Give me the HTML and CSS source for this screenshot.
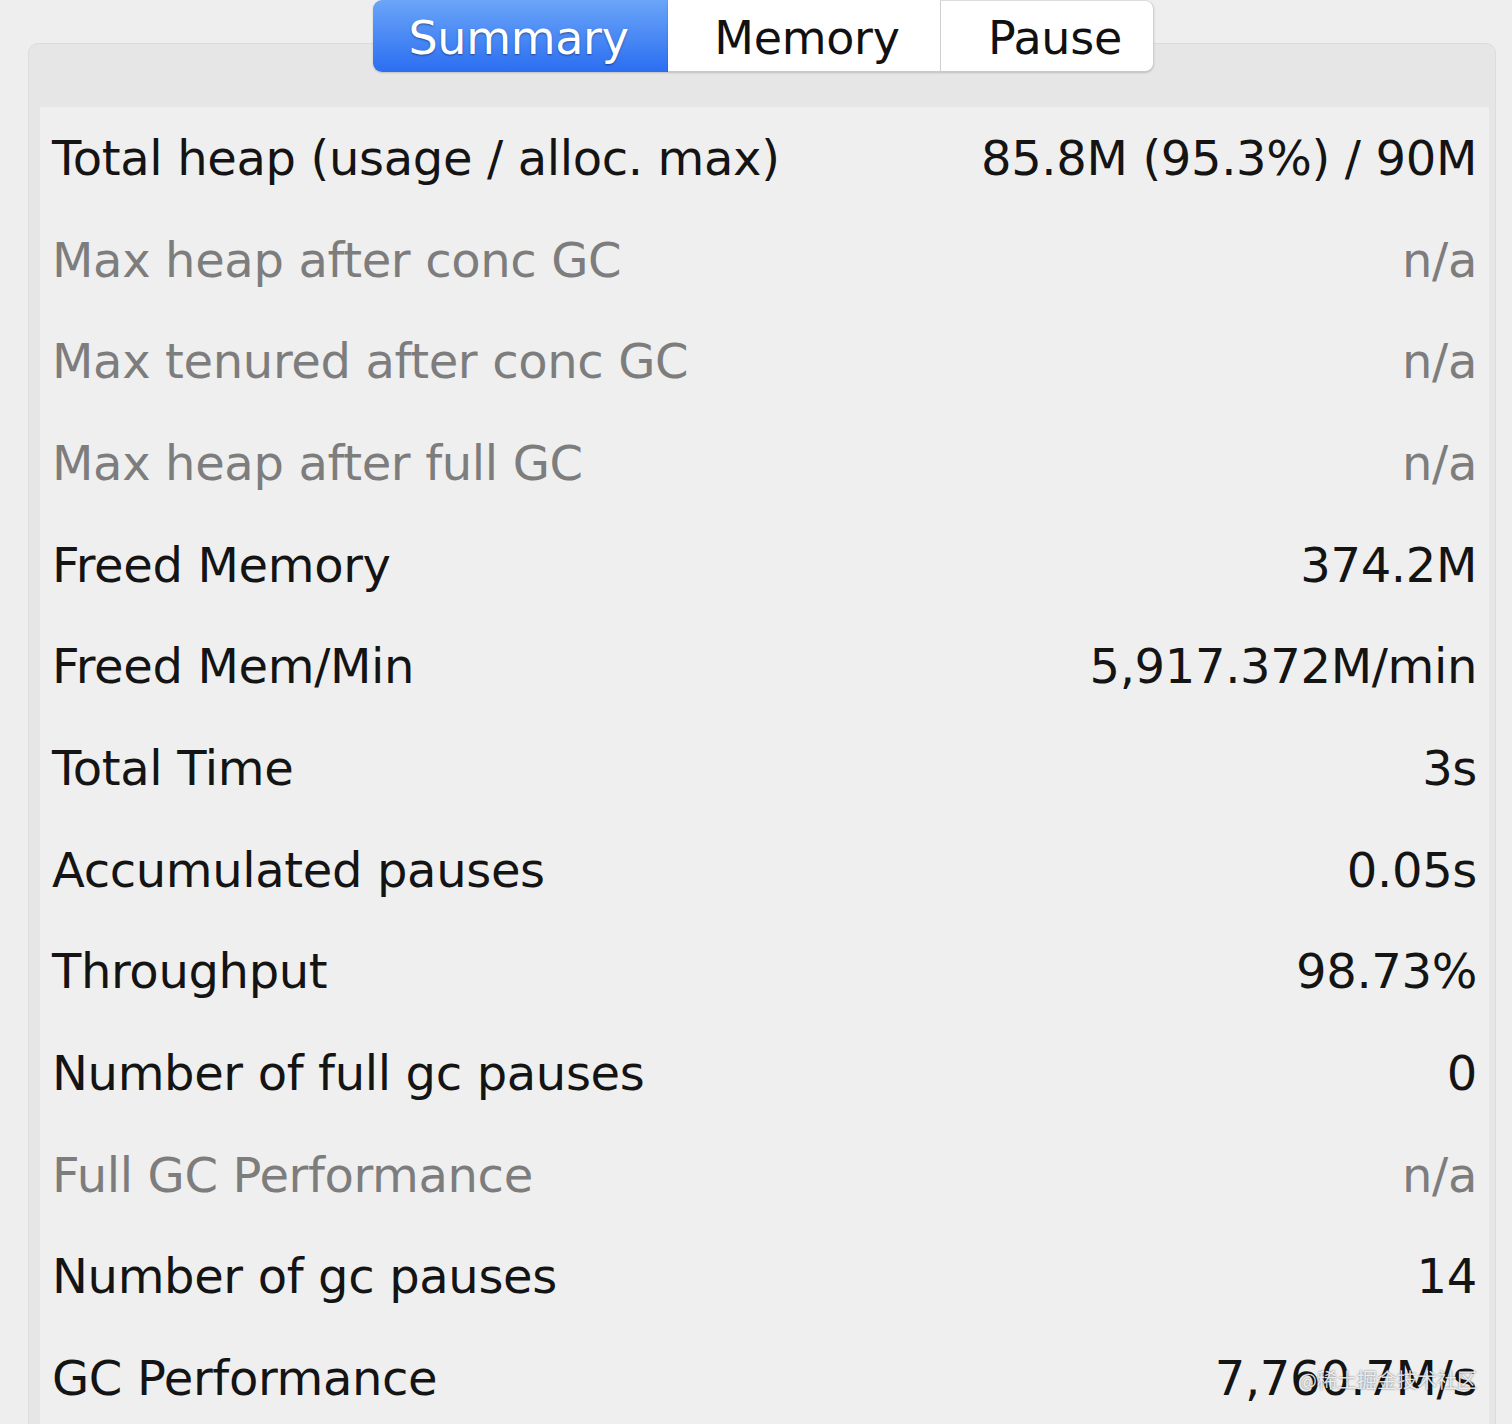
FILE: index.html
```html
<!DOCTYPE html>
<html>
<head>
<meta charset="utf-8">
<link rel="stylesheet" href="styles.css">
</head>
<body>
<div class="tabs">
  <div class="tab active">Summary</div>
  <div class="tab">Memory</div>
  <div class="tab last">Pause</div>
</div>
<div class="frame">
  <div class="content">
    <div class="row"><span class="label">Total heap (usage / alloc. max)</span><span class="value">85.8M (95.3%) / 90M</span></div>
    <div class="row muted"><span class="label">Max heap after conc GC</span><span class="value">n/a</span></div>
    <div class="row muted"><span class="label">Max tenured after conc GC</span><span class="value">n/a</span></div>
    <div class="row muted"><span class="label">Max heap after full GC</span><span class="value">n/a</span></div>
    <div class="row"><span class="label">Freed Memory</span><span class="value">374.2M</span></div>
    <div class="row"><span class="label">Freed Mem/Min</span><span class="value">5,917.372M/min</span></div>
    <div class="row"><span class="label">Total Time</span><span class="value">3s</span></div>
    <div class="row"><span class="label">Accumulated pauses</span><span class="value">0.05s</span></div>
    <div class="row"><span class="label">Throughput</span><span class="value">98.73%</span></div>
    <div class="row"><span class="label">Number of full gc pauses</span><span class="value">0</span></div>
    <div class="row muted"><span class="label">Full GC Performance</span><span class="value">n/a</span></div>
    <div class="row"><span class="label">Number of gc pauses</span><span class="value">14</span></div>
    <div class="row last-row"><span class="label">GC Performance</span><span class="value">7,760.7M/s</span><span class="watermark">@稀土掘金技术社区</span></div>
  </div>
</div>
</body>
</html>
```
FILE: styles.css
```css
html, body {
  margin: 0;
  padding: 0;
  background: #eeeeee;
  overflow: hidden;
}
body {
  width: 1512px;
  height: 1424px;
  font-family: "DejaVu Sans", "Open Sans", sans-serif;
}
.tabs {
  display: flex;
  margin-left: 373px;
  width: 781px;
  height: 72px;
  position: relative;
  z-index: 2;
}
.tab {
  box-sizing: border-box;
  height: 72px;
  display: flex;
  align-items: center;
  justify-content: center;
  padding-top: 4px;
  background: #ffffff;
  color: #111;
  font-size: 46px;
  letter-spacing: -0.3px;
  border-bottom: 1px solid #c9c9c9;
  border-right: 1px solid #dadada;
  box-shadow: 0 1px 2px rgba(0,0,0,0.18);
}
.tab.active {
  width: 295px;
  padding-right: 4px;
  color: #fff;
  background: linear-gradient(#6aa5f8, #2b6ef1);
  border-radius: 9px 0 0 9px;
  border: none;
  text-shadow: 0 1px 2px rgba(0,0,40,0.45);
}
.tab:nth-child(2) { width: 273px; padding-left: 6px; }
.tab.last {
  width: 213px;
  padding-left: 16px;
  border-radius: 0 9px 9px 0;
  border-right: 1px solid #d0d0d0;
  border-top: 1px solid #dcdcdc;
}
.frame {
  margin-top: -29px;
  margin-left: 28px;
  width: 1468px;
  box-sizing: border-box;
  height: 1420px;
  background: #e6e6e6;
  border: 1px solid #dcdcdc;
  border-radius: 10px;
  padding: 64px 6px 0 11px;
}
.content {
  background: #efefef;
  height: 100%;
  padding: 0 12px;
}
.row {
  height: 101.7px;
  display: flex;
  align-items: center;
  justify-content: space-between;
  padding-top: 0;
  margin-top: -1px;
  margin-bottom: 1px;
  font-size: 48px;
  letter-spacing: -0.35px;
  color: #141414;
  white-space: nowrap;
}
.row.muted {
  color: #7d7d7d;
}
.last-row {
  position: relative;
}
.watermark {
  position: absolute;
  right: 0;
  top: 38px;
  font-family: "Noto Sans CJK SC", sans-serif;
  font-size: 20px;
  letter-spacing: 0;
  color: rgba(255,255,255,0.85);
  text-shadow: 0 0 2px rgba(0,0,0,0.6);
}
```
